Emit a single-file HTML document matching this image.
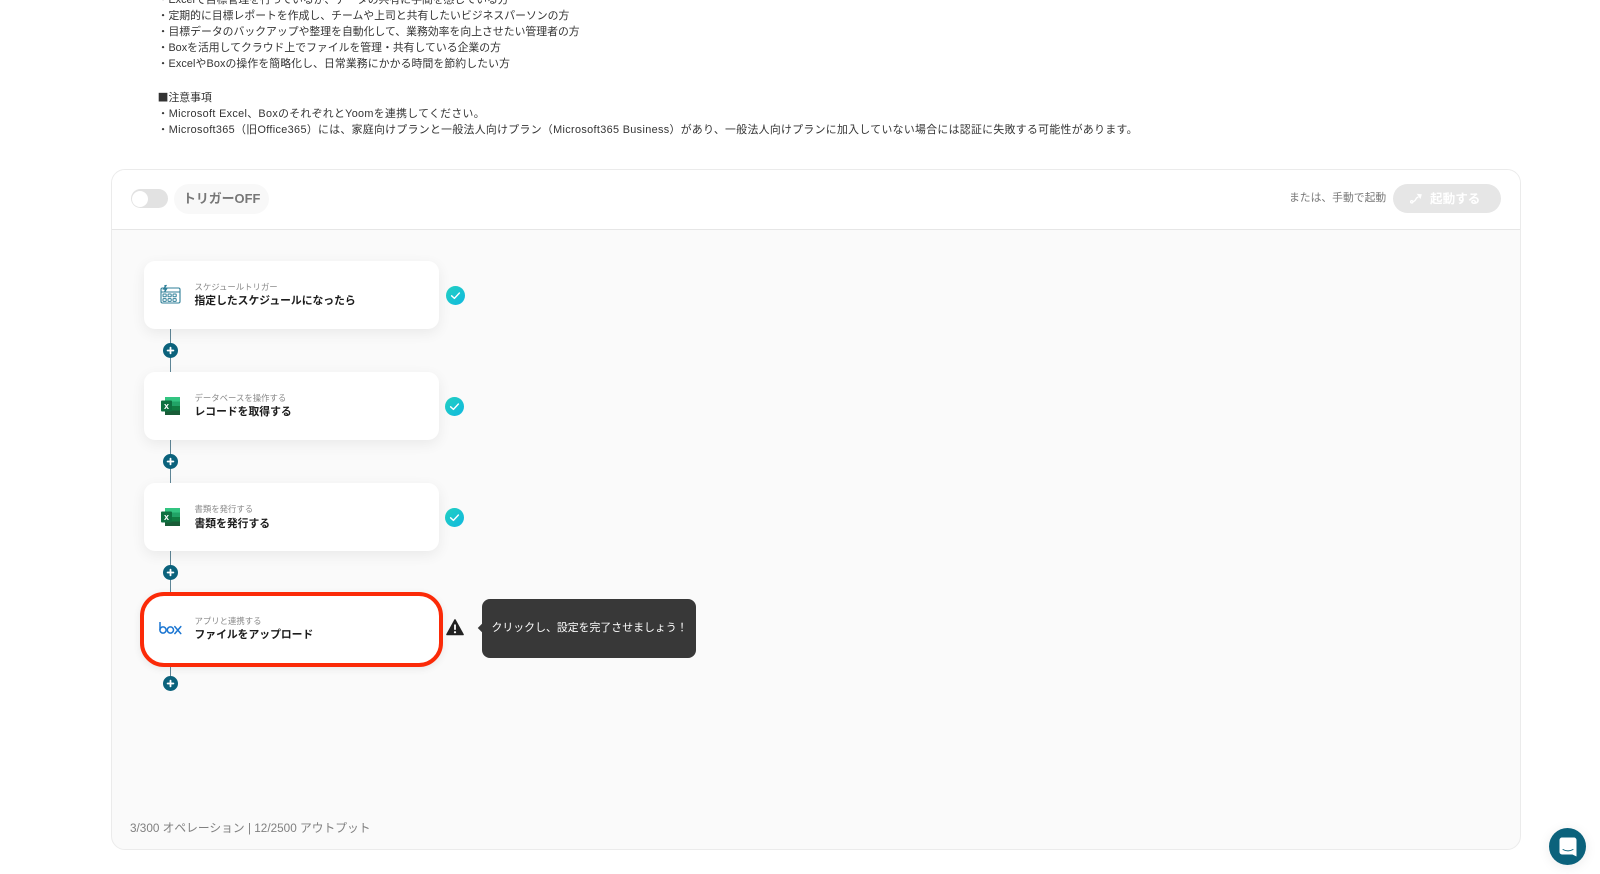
<!DOCTYPE html>
<html lang="ja"><head><meta charset="utf-8"><style>
html,body{margin:0;padding:0;background:#fff}
body{width:1600px;height:874px;overflow:hidden;position:relative;font-family:"Liberation Sans","Noto Sans CJK JP",sans-serif;color:#333;filter:blur(.25px)}
.a{position:absolute}
.t{position:absolute;white-space:nowrap;line-height:16px}
.l{left:157.6px;font-size:10.85px;color:#333}
#panel{left:111px;top:169px;width:1410px;height:681px;box-sizing:border-box;border:1px solid #ebebeb;border-radius:14px;background:#fafafa;overflow:hidden}
#head{left:0;top:0;width:1408px;height:59px;background:#fff;border-bottom:1px solid #e6e6e6}
.card{position:absolute;left:143.5px;width:295.5px;height:68px;background:#fff;border-radius:11px;box-shadow:0 4px 14px rgba(0,0,0,.07)}
.sub{position:absolute;left:194.5px;font-size:8.4px;color:#8a8a8a;white-space:nowrap;line-height:12px}
.ttl{position:absolute;left:194.5px;font-size:10.8px;font-weight:700;color:#1c1c1c;white-space:nowrap;line-height:14px}
.line{position:absolute;left:170.2px;width:1.2px;background:#5f8697}
.plus{position:absolute;left:163.2px;width:15px;height:15px}
.chk{position:absolute;width:19px;height:19px}
</style></head><body>
<div class="t l" style="top:-8.3px">・Excelで目標管理を行っているが、データの共有に手間を感じている方</div>
<div class="t l" style="top:7.7px">・定期的に目標レポートを作成し、チームや上司と共有したいビジネスパーソンの方</div>
<div class="t l" style="top:23.7px">・目標データのバックアップや整理を自動化して、業務効率を向上させたい管理者の方</div>
<div class="t l" style="top:40.3px">・Boxを活用してクラウド上でファイルを管理・共有している企業の方</div>
<div class="t l" style="top:56px;letter-spacing:.1px">・ExcelやBoxの操作を簡略化し、日常業務にかかる時間を節約したい方</div>
<div class="t l" style="top:89px"><span style="font-family:'Noto Sans CJK JP',sans-serif">■</span>注意事項</div>
<div class="t l" style="top:106px;letter-spacing:.33px">・Microsoft Excel、Boxのそれぞれと<span>Yoom</span>を連携してください。</div>
<div class="t l" style="top:121.7px;letter-spacing:.35px">・Microsoft365（旧Office365）には、家庭向けプランと一般法人向けプラン（Microsoft365 Business）があり、一般法人向けプランに加入していない場合には認証に失敗する可能性があります。</div>

<div id="panel" class="a"><div id="head" class="a"></div></div>

<div class="a" style="left:130.7px;top:189px;width:37px;height:19px;background:#e2e2e2;border-radius:10px"></div>
<div class="a" style="left:131.5px;top:190.5px;width:16px;height:16px;background:#fff;border-radius:50%"></div>
<div class="a" style="left:174px;top:183.5px;width:95px;height:30.5px;background:#f8f8f8;border-radius:15px"></div>
<div class="t" style="left:183px;top:191px;font-size:12.9px;font-weight:700;color:#777">トリガーOFF</div>
<div class="t" style="left:1289px;top:190px;font-size:10.8px;color:#777">または、手動で起動</div>
<div class="a" style="left:1392.7px;top:184px;width:108.6px;height:28.7px;background:#e6e6e6;border-radius:15px"></div>
<svg class="a" style="left:1409px;top:191px" width="14" height="14" viewBox="0 0 14 14" fill="none" stroke="#fff" stroke-width="1.3" stroke-linecap="round"><circle cx="2.8" cy="10.8" r="1.2"/><path d="M4 10.5C7 10.5 6.5 6.5 9 6.2"/><path d="M9 3.5L12 3.8L11.2 6.6Z" fill="#fff"/></svg>
<div class="t" style="left:1430px;top:190.5px;font-size:12.6px;font-weight:700;color:#fff">起動する</div>

<!-- connectors -->
<div class="line" style="top:329px;height:44px"></div>
<div class="line" style="top:440px;height:44px"></div>
<div class="line" style="top:551px;height:42px"></div>
<div class="line" style="top:664px;height:14px"></div>

<svg class="plus" style="top:342.5px" viewBox="0 0 15 15"><circle cx="7.5" cy="7.5" r="7.5" fill="#0b627c"/><path d="M7.5 4.6V10.4M4.6 7.5H10.4" stroke="#fff" stroke-width="1.8" stroke-linecap="round"/></svg>
<svg class="plus" style="top:454px" viewBox="0 0 15 15"><circle cx="7.5" cy="7.5" r="7.5" fill="#0b627c"/><path d="M7.5 4.6V10.4M4.6 7.5H10.4" stroke="#fff" stroke-width="1.8" stroke-linecap="round"/></svg>
<svg class="plus" style="top:564.8px" viewBox="0 0 15 15"><circle cx="7.5" cy="7.5" r="7.5" fill="#0b627c"/><path d="M7.5 4.6V10.4M4.6 7.5H10.4" stroke="#fff" stroke-width="1.8" stroke-linecap="round"/></svg>
<svg class="plus" style="top:675.8px" viewBox="0 0 15 15"><circle cx="7.5" cy="7.5" r="7.5" fill="#0b627c"/><path d="M7.5 4.6V10.4M4.6 7.5H10.4" stroke="#fff" stroke-width="1.8" stroke-linecap="round"/></svg>

<!-- cards -->
<div class="card" style="top:261px"></div>
<div class="card" style="top:372px"></div>
<div class="card" style="top:483px"></div>
<div class="card" style="left:139.5px;top:591.5px;width:303.5px;height:75.5px;box-sizing:border-box;border:4.8px solid #fb2a08;border-radius:24px;box-shadow:0 2px 8px rgba(0,0,0,.08)"></div>

<svg class="a" style="left:160px;top:284px" width="21" height="20" viewBox="0 0 21 20" fill="none" stroke="#2f7f98" stroke-width="1.1"><rect x="1" y="4" width="19" height="15" rx="1.5"/><path d="M1 8H20"/><path d="M5 1V6.5M6.5 1L3.5 5H6.5L4.5 8" stroke-width="1.2"/><g stroke-width="1"><rect x="3" y="10" width="3.2" height="2.8" rx=".6"/><rect x="8" y="10" width="3.2" height="2.8" rx=".6"/><rect x="13" y="10" width="3.2" height="2.8" rx=".6"/><rect x="3" y="14.6" width="3.2" height="2.8" rx=".6"/><rect x="8" y="14.6" width="3.2" height="2.8" rx=".6"/><rect x="13" y="14.6" width="3.2" height="2.8" rx=".6"/></g></svg>

<svg class="a" style="left:161px;top:397px" width="19" height="18" viewBox="0 0 19 18"><rect x="4" y="0" width="15" height="18" rx="1" fill="#21a366"/><rect x="4" y="0" width="15" height="4.5" fill="#33c481"/><rect x="4" y="9" width="15" height="4.5" fill="#107c41"/><rect x="4" y="13.5" width="15" height="4.5" fill="#185c37"/><rect x="11.5" y="4.5" width="7.5" height="4.5" fill="#21a366"/><rect x="0" y="3.5" width="11" height="11" rx="1" fill="#0e7040"/><text x="5.5" y="12" font-size="9" font-weight="700" fill="#fff" text-anchor="middle" font-family="Liberation Sans">x</text></svg>
<svg class="a" style="left:161px;top:508px" width="19" height="18" viewBox="0 0 19 18"><rect x="4" y="0" width="15" height="18" rx="1" fill="#21a366"/><rect x="4" y="0" width="15" height="4.5" fill="#33c481"/><rect x="4" y="9" width="15" height="4.5" fill="#107c41"/><rect x="4" y="13.5" width="15" height="4.5" fill="#185c37"/><rect x="11.5" y="4.5" width="7.5" height="4.5" fill="#21a366"/><rect x="0" y="3.5" width="11" height="11" rx="1" fill="#0e7040"/><text x="5.5" y="12" font-size="9" font-weight="700" fill="#fff" text-anchor="middle" font-family="Liberation Sans">x</text></svg>

<svg class="a" style="left:158.5px;top:621px" width="23" height="14" viewBox="0 0 23 14" fill="none" stroke="#1b76d2" stroke-width="1.5"><path d="M1 1V9"/><circle cx="4" cy="9" r="3.1"/><circle cx="11.4" cy="9" r="3.1"/><path d="M15.8 5.6L21.8 12.6M21.8 5.6L15.8 12.6" stroke-linecap="round"/></svg>

<div class="sub" style="top:280.5px">スケジュールトリガー</div>
<div class="ttl" style="top:294px">指定したスケジュールになったら</div>
<div class="sub" style="top:391.5px">データベースを操作する</div>
<div class="ttl" style="top:405.3px">レコードを取得する</div>
<div class="sub" style="top:503px">書類を発行する</div>
<div class="ttl" style="top:517px">書類を発行する</div>
<div class="sub" style="top:614.5px">アプリと連携する</div>
<div class="ttl" style="top:627.8px">ファイルをアップロード</div>

<svg width="0" height="0" style="position:absolute"><defs><linearGradient id="g" x1="0" y1="0" x2="1" y2="1"><stop offset="0" stop-color="#22d0c0"/><stop offset="1" stop-color="#10b8e0"/></linearGradient></defs></svg>
<svg class="chk" style="left:446px;top:286px" viewBox="0 0 19 19"><circle cx="9.5" cy="9.5" r="9.5" fill="url(#g)"/><path d="M5.6 9.8L8.4 12.4L13.4 7" fill="none" stroke="#fff" stroke-width="1.4" stroke-linecap="round" stroke-linejoin="round"/></svg>
<svg class="chk" style="left:445px;top:397px" viewBox="0 0 19 19"><circle cx="9.5" cy="9.5" r="9.5" fill="url(#g)"/><path d="M5.6 9.8L8.4 12.4L13.4 7" fill="none" stroke="#fff" stroke-width="1.4" stroke-linecap="round" stroke-linejoin="round"/></svg>
<svg class="chk" style="left:445px;top:508px" viewBox="0 0 19 19"><circle cx="9.5" cy="9.5" r="9.5" fill="url(#g)"/><path d="M5.6 9.8L8.4 12.4L13.4 7" fill="none" stroke="#fff" stroke-width="1.4" stroke-linecap="round" stroke-linejoin="round"/></svg>

<svg class="a" style="left:445.5px;top:618.5px" width="18" height="17" viewBox="0 0 18 17"><path d="M9 1L17 15.5H1Z" fill="#222" stroke="#222" stroke-width="1.6" stroke-linejoin="round"/><path d="M9 5.5V10.8" stroke="#fff" stroke-width="1.8"/><circle cx="9" cy="13.2" r="1.1" fill="#fff"/></svg>

<div class="a" style="left:481.7px;top:599px;width:214.5px;height:58.5px;background:#383838;border-radius:8px"></div>
<div class="a" style="left:478.5px;top:625px;width:6px;height:6px;background:#383838;transform:rotate(45deg)"></div>
<div class="t" style="left:491.5px;top:620px;font-size:10.9px;color:#fff">クリックし、設定を完了させましょう！</div>

<div class="t" style="left:130px;top:820.7px;font-size:11.75px;color:#808080">3/300 オペレーション | 12/2500 アウトプット</div>

<div class="a" style="left:1549px;top:828px;width:37px;height:37px;background:#0b627c;border-radius:50%;box-shadow:0 2px 12px rgba(0,0,0,.08)"></div>
<svg class="a" style="left:1559px;top:836.5px" width="18" height="20" viewBox="0 0 18 20"><path d="M3 .5H15A2.5 2.5 0 0 1 17.5 3V19.5L13.5 17.5H3A2.5 2.5 0 0 1 .5 15V3A2.5 2.5 0 0 1 3 .5Z" fill="#fff"/><path d="M4 12.5C7 14.3 11 14.3 14 12.5" fill="none" stroke="#0b627c" stroke-width="1" stroke-linecap="round"/></svg>
</body></html>
